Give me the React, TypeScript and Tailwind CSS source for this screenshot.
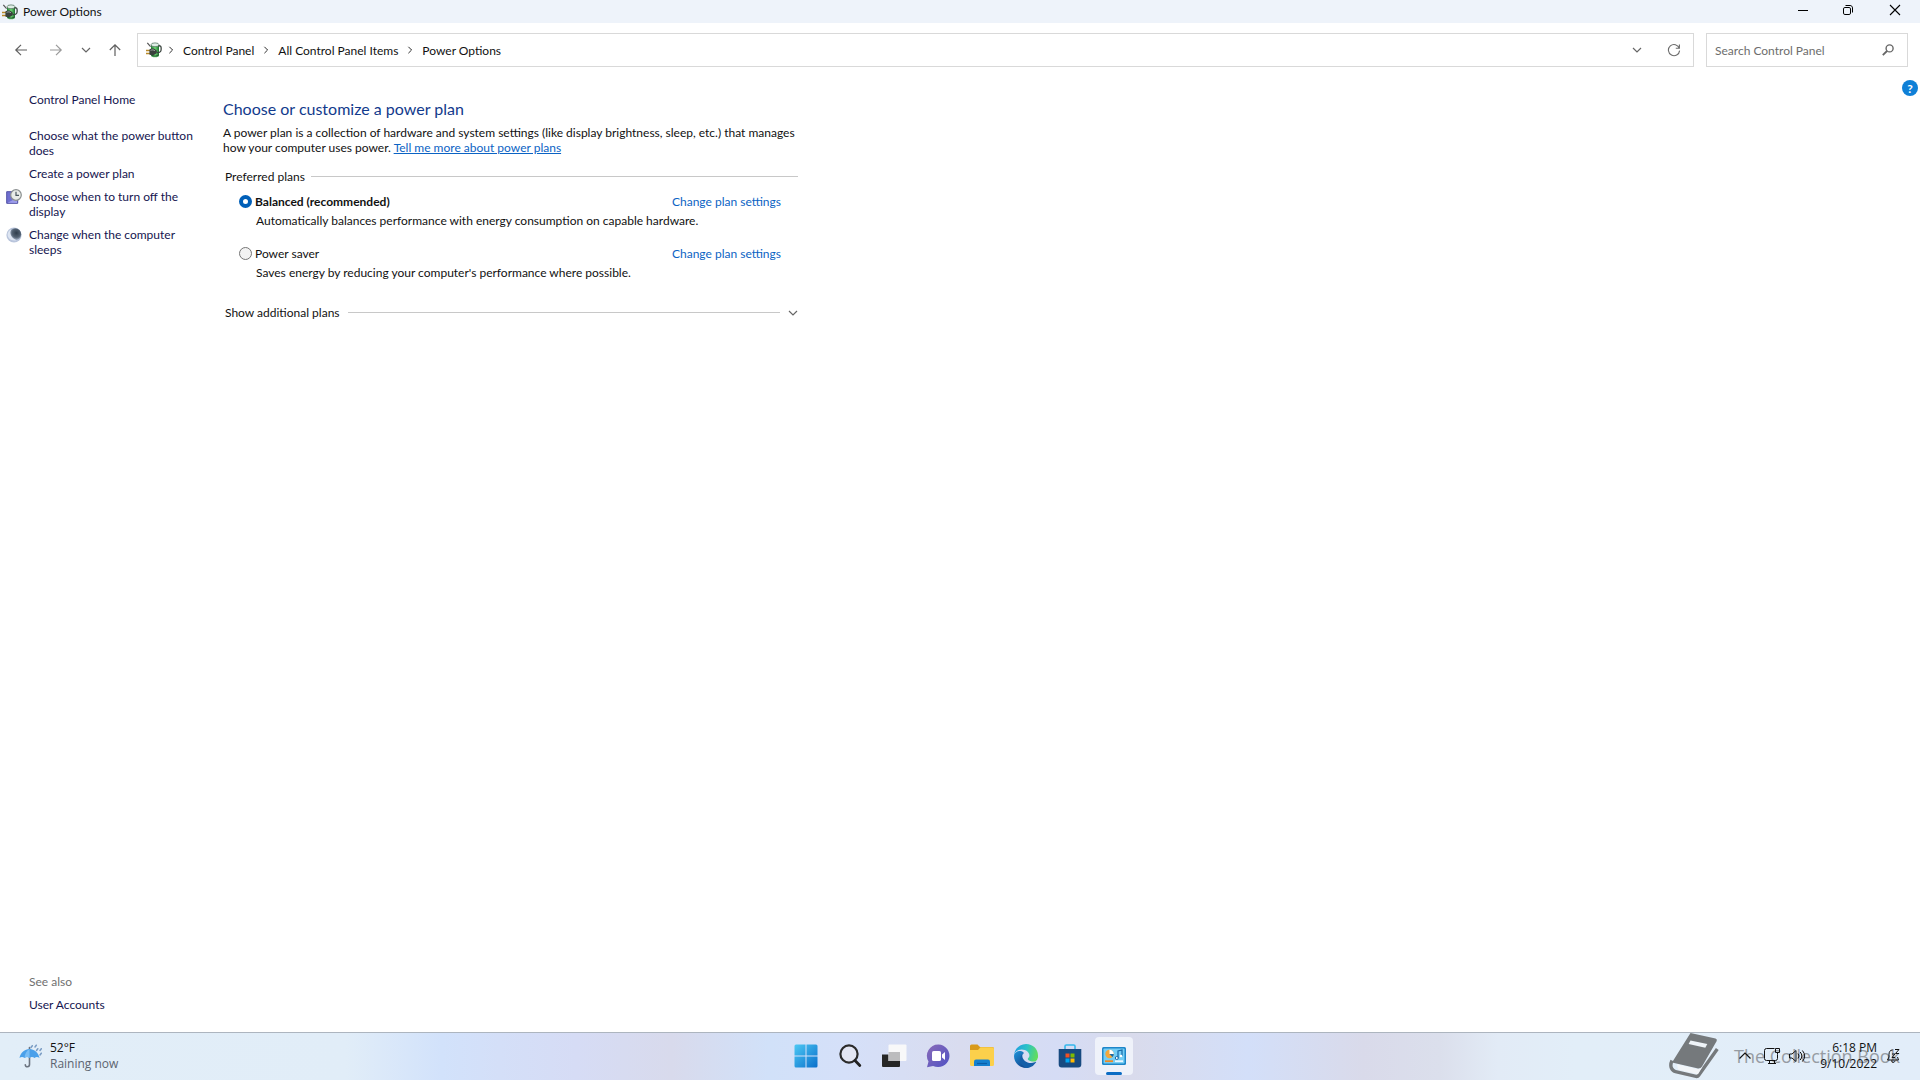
import { useState } from "react";

const sidebarLinks = [
  { label: "Choose what the power button does", icon: null },
  { label: "Create a power plan", icon: null },
  { label: "Choose when to turn off the display", icon: "display" },
  { label: "Change when the computer sleeps", icon: "sleep" },
];

const plans = [
  {
    id: "balanced",
    name: "Balanced (recommended)",
    description: "Automatically balances performance with energy consumption on capable hardware.",
  },
  {
    id: "saver",
    name: "Power saver",
    description: "Saves energy by reducing your computer's performance where possible.",
  },
];

const crumbs = ["Control Panel", "All Control Panel Items", "Power Options"];

function PowerIcon() {
  return (
    <svg width="16" height="16" viewBox="0 0 16 16" className="shrink-0" aria-hidden="true">
      <defs>
        <linearGradient id="cell" x1="0" x2="1">
          <stop offset="0" stopColor="#1f7a33" />
          <stop offset="0.5" stopColor="#6fdc74" />
          <stop offset="1" stopColor="#1c6e2f" />
        </linearGradient>
      </defs>
      <path d="M5 3v10.5c0 2.4 8 2.4 8 0V3z" fill="url(#cell)" />
      <ellipse cx="9" cy="2.8" rx="4" ry="1.9" fill="#dfeee6" stroke="#5c7a68" strokeWidth="0.8" />
      <path d="M5.5 12.7c1.4 1.9 5.8 1.9 7 0" stroke="#24502f" fill="none" />
      <path d="M1.3.8 4.6 4.6" stroke="#555" strokeWidth="1.2" />
      <path d="M11 10.6c4 .6 4.5-2.4 4-5.6-.4-1.4-1.6-1.6-2.4-.6" fill="none" stroke="#3c4640" strokeWidth="1.3" />
      <path d="M0 8.4h4M0 11.6h4" stroke="#b98a2b" strokeWidth="1.5" />
      <path d="M3.4 7.4C5 6 9 6 10.6 8.6c.8 1.6 0 3.4-1.8 4-2 .8-4.2.6-5.4-.2z" fill="#39413d" />
      <path d="M4.6 8.4c1.6-.8 3.2-.7 4.4.4" stroke="#9ba5a0" fill="none" />
    </svg>
  );
}

function DisplayClockIcon() {
  return (
    <svg width="16" height="16" viewBox="0 0 16 16" aria-hidden="true">
      <path d="M.7 2.7h11v11.6H.7z" fill="#6f6fd0" stroke="#5252a6" />
      <path d="M1.5 13.8 11 9v5z" fill="#9d9deb" />
      <circle cx="10" cy="6" r="5.3" fill="#e9ece8" stroke="#8b9091" strokeWidth="1.2" />
      <path d="M10 2.8V6.4h3" fill="none" stroke="#4c5860" strokeWidth="1.2" />
    </svg>
  );
}

function MoonIcon() {
  return (
    <svg width="16" height="16" viewBox="0 0 16 16" aria-hidden="true">
      <defs>
        <radialGradient id="moon" cx="0.6" cy="0.4" r="0.6">
          <stop offset="0" stopColor="#2f3d4c" />
          <stop offset="0.6" stopColor="#536273" />
          <stop offset="1" stopColor="#a9b7cc" />
        </radialGradient>
      </defs>
      <circle cx="8" cy="8" r="7.6" fill="#b9c5dc" />
      <circle cx="9.2" cy="7.2" r="6" fill="url(#moon)" />
      <path d="M5.2 2.6C3 6.4 5.4 11.4 10.6 13.2 5.6 14.6 1.6 11.4 1.6 7.6c0-2 1.6-4.2 3.6-5z" fill="#dde5f2" />
    </svg>
  );
}

function Chevron({ className = "" }: { className?: string }) {
  return (
    <svg width="10" height="10" viewBox="0 0 10 10" className={className} aria-hidden="true">
      <path d="M1 3l4 4 4-4" fill="none" stroke="currentColor" strokeWidth="1.2" />
    </svg>
  );
}

function TitleBar() {
  return (
    <header className="flex h-[23px] items-center bg-[#eef3fa] pl-[2px]">
      <PowerIcon />
      <h1 className="ml-[5px]">Power Options</h1>
      <div className="ml-auto flex h-5 self-start">
        <button type="button" aria-label="Minimize" className="flex w-[45px] items-center justify-center">
          <svg width="12" height="12" viewBox="0 0 12 12">
            <path d="M1 6.5h10" stroke="#000" />
          </svg>
        </button>
        <button type="button" aria-label="Restore" className="flex w-[45px] items-center justify-center">
          <svg width="12" height="12" viewBox="0 0 12 12" fill="none" stroke="#000">
            <rect x="1.5" y="3.5" width="7" height="7" rx="1.4" />
            <path d="M3.5 1.5h4.6c1.3 0 2.4 1 2.4 2.4v4.6" />
          </svg>
        </button>
        <button type="button" aria-label="Close" className="flex w-[50px] items-center justify-center">
          <svg width="12" height="12" viewBox="0 0 12 12">
            <path d="M1 1l10 10M11 1 1 11" stroke="#000" strokeWidth="1.1" />
          </svg>
        </button>
      </div>
    </header>
  );
}

function NavBar() {
  return (
    <nav className="flex items-center pt-[10px] pr-3 pl-2" aria-label="Address">
      <div className="flex w-[129px] items-center text-[#666]">
        <button type="button" aria-label="Back" className="flex w-[25px] justify-center">
          <svg width="14" height="14" viewBox="0 0 14 14" fill="none" stroke="#5f5f5f" strokeWidth="1.2">
            <path d="M13 7H1.8M7 1.8 1.8 7 7 12.2" />
          </svg>
        </button>
        <button type="button" aria-label="Forward" className="ml-[10px] flex w-[25px] justify-center">
          <svg width="14" height="14" viewBox="0 0 14 14" fill="none" stroke="#9a9a9a" strokeWidth="1.2">
            <path d="M1 7h11.2M7 1.8 12.2 7 7 12.2" />
          </svg>
        </button>
        <button type="button" aria-label="Recent locations" className="ml-2 flex w-5 justify-center">
          <Chevron />
        </button>
        <button type="button" aria-label="Up" className="ml-2 flex w-[22px] justify-center">
          <svg width="14" height="14" viewBox="0 0 14 14" fill="none" stroke="#5f5f5f" strokeWidth="1.2">
            <path d="M7 13V1.8M1.8 7 7 1.8 12.2 7" />
          </svg>
        </button>
      </div>

      <div className="flex h-[34px] flex-1 items-center border border-[#d9d9d9] bg-white pr-3 pl-2">
        <PowerIcon />
        <ol className="flex items-center">
          {crumbs.map((crumb) => (
            <li key={crumb} className="flex items-center">
              <Chevron className="mx-[5px] h-2 w-2 -rotate-90 text-[#222]" />
              <a href="#" className="px-[3px]">
                {crumb}
              </a>
            </li>
          ))}
        </ol>
        <button type="button" aria-label="Previous locations" className="ml-auto text-[#666]">
          <Chevron />
        </button>
        <button type="button" aria-label="Refresh" className="ml-[25px]">
          <svg width="14" height="14" viewBox="0 0 14 14" fill="none" stroke="#6b6b6b" strokeWidth="1.1">
            <path d="M12.3 5.2A5.6 5.6 0 1 0 12.6 7.6M12.4 1.4v3.8H8.8" />
          </svg>
        </button>
      </div>

      <form
        className="ml-3 flex h-[34px] w-[202px] items-center border border-[#d9d9d9] pr-[13px] pl-2"
        onSubmit={(e) => e.preventDefault()}
      >
        <input
          type="search"
          aria-label="Search Control Panel"
          placeholder="Search Control Panel"
          className="min-w-0 flex-1 outline-none placeholder:text-[#6d6d6d]"
        />
        <button type="submit" aria-label="Search">
          <svg width="12" height="12" viewBox="0 0 12 12" fill="none" stroke="#666">
            <circle cx="7.6" cy="4.4" r="3.5" strokeWidth="1.4" />
            <path d="M5 7 .8 11.2" strokeWidth="1.8" />
          </svg>
        </button>
      </form>
    </nav>
  );
}

function Sidebar() {
  return (
    <aside className="flex w-[200px] shrink-0 flex-col pt-[25px] pb-5 pl-[6px] text-[#15154f]">
      <a href="#" className="mb-[21px] pl-[23px]">
        Control Panel Home
      </a>
      <ul className="flex flex-col gap-2">
        {sidebarLinks.map((link) => (
          <li key={link.label} className="flex">
            <span className="w-[23px] shrink-0">
              {link.icon === "display" && <DisplayClockIcon />}
              {link.icon === "sleep" && <MoonIcon />}
            </span>
            <a href="#">{link.label}</a>
          </li>
        ))}
      </ul>
      <div className="mt-auto flex flex-col gap-2 pl-[23px]">
        <h2 className="text-[#707070]">See also</h2>
        <a href="#">User Accounts</a>
      </div>
    </aside>
  );
}

function PlanPicker() {
  const [active, setActive] = useState("balanced");

  return (
    <section className="w-[580px] pt-[31px]">
      <h2 className="text-[16px] leading-[21px] text-[#123a8c]">Choose or customize a power plan</h2>
      <p className="mt-[6px]">
        A power plan is a collection of hardware and system settings (like display brightness, sleep, etc.) that manages how your
        computer uses power.{" "}
        <a href="#" className="text-[#0b63c4] underline">
          Tell me more about power plans
        </a>
      </p>

      <fieldset className="mt-[14px] pr-[5px] pl-[2px]" aria-labelledby="preferred">
        <div className="flex items-center gap-[6px]">
          <span id="preferred">Preferred plans</span>
          <span className="h-px flex-1 bg-[#c8c8c8]" />
        </div>
        {plans.map((plan, idx) => (
          <div key={plan.id} className={`pr-[17px] pl-[14px] ${idx === 0 ? "mt-[10px]" : "mt-[18px]"}`}>
            <div className="flex items-center">
              <input
                type="radio"
                id={plan.id}
                name="plan"
                checked={active === plan.id}
                onChange={() => setActive(plan.id)}
                className="size-[13px] shrink-0 appearance-none rounded-full border border-[#757575] bg-[#f3f3f3] checked:border-4 checked:border-[#005fb8] checked:bg-white"
              />
              <label htmlFor={plan.id} className={`ml-[3px] ${active === plan.id ? "font-bold" : ""}`}>
                {plan.name}
              </label>
              <a href="#" className="ml-auto text-[#0b63c4]">
                Change plan settings
              </a>
            </div>
            <p className="mt-1 ml-[17px]">{plan.description}</p>
          </div>
        ))}
      </fieldset>

      <button type="button" className="mt-[25px] flex w-full items-center pr-[5px] pl-[2px]">
        <span>Show additional plans</span>
        <span className="mx-2 h-px flex-1 bg-[#c8c8c8]" />
        <Chevron className="text-[#666]" />
      </button>
    </section>
  );
}

function StartIcon() {
  return (
    <svg width="24" height="24" viewBox="0 0 24 24">
      <defs>
        <linearGradient id="start" x1="0" y1="0" x2="1" y2="1">
          <stop offset="0" stopColor="#4cc8f4" />
          <stop offset="1" stopColor="#0a6fcb" />
        </linearGradient>
      </defs>
      <path
        d="M.5 2Q.5.5 2 .5h9.5v11H.5zM12.5.5H22q1.500 0 1.500 1.500v9.500h-11zM.5 12.500h11v11H2q-1.500 0-1.500-1.500zM12.500 12.500h11V22q0 1.500-1.500 1.500h-9.500z"
        fill="url(#start)"
      />
    </svg>
  );
}

function SearchIcon() {
  return (
    <svg width="24" height="24" viewBox="0 0 24 24" fill="none">
      <circle cx="11" cy="10" r="8.600" fill="#e3e6f3" stroke="#2b2b2b" strokeWidth="2.200" />
      <path d="m17 16.500 4.800 5" stroke="#222" strokeWidth="2.800" strokeLinecap="round" />
    </svg>
  );
}

function TaskViewIcon() {
  return (
    <svg width="26" height="24" viewBox="0 0 26 24">
      <path d="M1 10.500h18v11.500q0 1-1 1H2q-1 0-1-1z" fill="#262626" />
      <path d="M7.500 1.500q0-1 1-1h16q1 0 1 1V16q0 1-1 1h-17z" fill="#f8f8f9" />
      <path d="M7.500 8H19v9H7.500z" fill="#bcbcbe" />
    </svg>
  );
}

function ChatIcon() {
  return (
    <svg width="24" height="24" viewBox="0 0 24 24">
      <defs>
        <linearGradient id="chat" x1="0" y1="0" x2="1" y2="1">
          <stop offset="0" stopColor="#8a6bb8" />
          <stop offset="1" stopColor="#4f52c4" />
        </linearGradient>
      </defs>
      <path d="M12.500.5a11.300 11.300 0 1 1-5.400 21.400L1 23.300l1.500-5.800A11.300 11.300 0 0 1 12.500.5z" fill="url(#chat)" />
      <rect x="6" y="7" width="9" height="10" rx="1.600" fill="#fff" />
      <path d="m16 10.500 3-2.500v8l-3-2.500z" fill="#fff" />
    </svg>
  );
}

function ExplorerIcon() {
  return (
    <svg width="26" height="24" viewBox="0 0 26 24">
      <path d="M1 2q0-1.500 1.500-1.500h6L11 3h12.500Q25 3 25 4.500V12H1z" fill="#d99a1a" />
      <path d="M1 6h8l2.500-2.800h12Q25 3.200 25 4.700v15.800q0 1.500-1.500 1.500h-21Q1 22 1 20.500z" fill="#fcd04b" />
      <path d="M5 22v-4.500q0-2 2-2h12q2 0 2 2V22z" fill="#1580cf" />
      <path d="M8 19.500h10" stroke="#0b5ea8" strokeWidth="1.200" />
    </svg>
  );
}

function EdgeIcon() {
  return (
    <svg width="24" height="24" viewBox="0 0 24 24">
      <defs>
        <linearGradient id="edgeTop" x1="0" y1="0.3" x2="1" y2="0.5">
          <stop offset="0" stopColor="#1f9ee0" />
          <stop offset="0.5" stopColor="#2bc3c7" />
          <stop offset="1" stopColor="#63dd5b" />
        </linearGradient>
        <linearGradient id="edgeLow" x1="0" y1="0" x2="0.6" y2="1">
          <stop offset="0" stopColor="#1e95dc" />
          <stop offset="1" stopColor="#124b93" />
        </linearGradient>
      </defs>
      <path
        d="M21.600 17.900c-.3.200-.7.300-1 .4a10 10 0 0 1-3.600.7c-4.700 0-8.700-3.200-8.700-7.300 0-1.200.7-2.200 1.700-2.800-4.200.2-5.300 4.600-5.300 7.200 0 7.300 6.700 8 8.200 8 .8 0 2-.2 2.700-.5A12 12 0 0 0 22 18.600c.3-.5-.1-.9-.4-.7z"
        fill="#145ea8"
      />
      <path d="M9.900 22.600a7.400 7.400 0 0 1-2.100-2C4.500 16 6.300 10.500 9.900 8.900 7.500 5.400 0 6.800 0 12c0 6.500 5.300 12 12 12-.7-.3-1.500-.8-2.100-1.400z" fill="url(#edgeLow)" />
      <path
        d="M14.300 14c-.1.100-.5.400-.5 1 0 .4.300.9.800 1.200 2.300 1.600 6.600 1.400 6.600 1.400A6.600 6.600 0 0 0 24 11.400C24 5 19 0 12 0 5.300 0 .1 5.300 0 11.800c.1-3.500 3.500-6.300 7.700-6.300 4.400 0 7.700 2.900 7.700 5.700 0 1.400-.5 2.200-1.100 2.800z"
        fill="url(#edgeTop)"
      />
    </svg>
  );
}

function StoreIcon() {
  return (
    <svg width="24" height="24" viewBox="0 0 24 24">
      <path d="M7 5.500V2.300Q7 1 8.300 1h7.400Q17 1 17 2.300v3.200" fill="none" stroke="#35b7ec" strokeWidth="1.600" />
      <path d="M.7 5h22.600v15.500q0 3-3 3H3.700q-3 0-3-3z" fill="#174a80" />
      <path d="M7.500 9.500h4v4h-4z" fill="#f25022" />
      <path d="M12.500 9.500h4v4h-4z" fill="#7fba00" />
      <path d="M7.500 14.500h4v4h-4z" fill="#00a4ef" />
      <path d="M12.500 14.500h4v4h-4z" fill="#ffb900" />
    </svg>
  );
}

function ControlPanelIcon() {
  return (
    <svg width="26" height="24" viewBox="0 0 26 24">
      <rect x="1" y="3" width="24" height="18" rx="1.500" fill="#1d86c9" />
      <rect x="2.500" y="4.500" width="21" height="15" rx="0.800" fill="#74cdf4" />
      <circle cx="8.500" cy="10" r="4.200" fill="#f2a73a" />
      <path d="M8.500 10V5.800a4.200 4.200 0 0 1 4.200 4.200z" fill="#fff" />
      <path d="M8.500 10h4.200a4.200 4.200 0 0 1-1.300 3z" fill="#1668a8" />
      <path d="M17 14V7l4-1v6" fill="none" stroke="#1668a8" strokeWidth="1.200" />
      <circle cx="15.800" cy="14" r="1.500" fill="#fff" stroke="#1668a8" />
      <circle cx="20" cy="12" r="1.300" fill="#fff" />
      <path d="M4 17.200h8" stroke="#f08a24" strokeWidth="1.800" />
      <path d="M14 17.200h8" stroke="#e9f7ff" strokeWidth="1.800" />
    </svg>
  );
}

const apps = [
  { name: "Start", Icon: StartIcon },
  { name: "Search", Icon: SearchIcon },
  { name: "Task view", Icon: TaskViewIcon },
  { name: "Chat", Icon: ChatIcon },
  { name: "File Explorer", Icon: ExplorerIcon },
  { name: "Microsoft Edge", Icon: EdgeIcon },
  { name: "Microsoft Store", Icon: StoreIcon },
  { name: "Control Panel", Icon: ControlPanelIcon, active: true },
];

function UmbrellaIcon() {
  return (
    <svg width="24" height="24" viewBox="0 0 24 24" fill="none">
      <path d="M10.500 3.500v2M10.500 13v7.500c0 3-4.200 3-4.200.3" stroke="#6c7480" strokeWidth="1.600" strokeLinecap="round" />
      <path
        d="M.5 14C1.500 8.500 5.800 5 10.500 5s9 3.500 10 9c-1.600-1.300-3.600-1.300-5 0-1.500-1.300-3.600-1.300-5 0-1.500-1.300-3.500-1.300-5 0-1.500-1.300-3.500-1.300-5 0z"
        fill="#4aa0ea"
      />
      <path d="M10.500 5c-3 1.800-4.800 5-5 9 1.500-1.300 3.500-1.300 5 0z" fill="#79bdf5" />
      <path
        d="m12 3.500 1.300-1.800M16 3l1.300-1.800M17.500 6.500l1.300-1.800M21 6.500l1.300-1.800M21 11l1.300-1.800"
        stroke="#7a9cc4"
        strokeWidth="1.500"
        strokeLinecap="round"
      />
    </svg>
  );
}

function Taskbar() {
  return (
    <footer className="relative grid h-12 grid-cols-[1fr_auto_1fr] items-center border-t border-[#adb5bf] bg-[linear-gradient(90deg,#e2eef8_0%,#e1edf8_18%,#d2e2fb_23%,#d4dff8_26%,#d6dcf5_30%,#d8daec_35%,#d1e1f9_40%,#d5e0f9_44%,#d9dcef_50%,#d5dcf5_55%,#d9dbec_59%,#d3dff9_65%,#d9daea_71%,#dbdfec_75%,#e2ebf6_78%,#e2eef8_82%,#e2edf9_100%)] pb-px font-['Open_Sans','Noto_Sans',sans-serif]">
      {/* channel logo, sits under the tray icons */}
      <div className="pointer-events-none absolute top-0 right-5 flex items-center gap-[15px] text-[18px] leading-[44px] text-[#969ca3]">
        <svg width="50" height="46" viewBox="0 0 50 46" aria-hidden="true">
          <path d="M21.500 0 46.500 5.500q2 .6 1.200 2.500L33 33.500Q31.500 36 28 35.200L3 29.500z" fill="#75797c" />
          <path d="M3 27.500C0 34 3.500 38 6.500 38.600L27 43.400q1.700.3 2.700-1.200L48.300 16" fill="none" stroke="#75797c" strokeWidth="3.400" />
          <path d="M8 31.300 28 36q3.500.8 5.500-2.300L29 41.300 9 36.500z" fill="#f2f5f8" />
          <path d="m21.500 7.500 16.800 3.600-2 3.600L19.600 11z" fill="#eef3f8" />
        </svg>
        <span>The Collection Book</span>
      </div>

      <button type="button" className="flex items-center gap-[7px] pl-[19px] text-left leading-4">
        <UmbrellaIcon />
        <span>
          <span className="block">52°F</span>
          <span className="block text-[#5c6470]">Raining now</span>
        </span>
      </button>

      <div className="flex">
        {apps.map(({ name, Icon, active }) => (
          <button
            key={name}
            type="button"
            aria-label={name}
            className="relative flex h-11 w-11 items-center justify-center"
          >
            <span className={`flex size-[38px] items-center justify-center rounded ${active ? "bg-[#eff2fa]" : ""}`}>
              <Icon />
            </span>
            {active && <span className="absolute bottom-[3px] h-[3px] w-4 rounded-full bg-[#0b6cc4]" />}
          </button>
        ))}
      </div>

      <div className="relative flex items-center justify-end pr-5">
        <button type="button" aria-label="Show hidden icons" className="mr-3">
          <svg width="14" height="14" viewBox="0 0 14 14" fill="none" stroke="#111" strokeWidth="1.200">
            <path d="m1.500 9.500 5.500-5.500 5.500 5.500" />
          </svg>
        </button>
        <button type="button" aria-label="Network" className="mr-2">
          <svg width="17" height="16" viewBox="0 0 17 16" fill="none" stroke="#111">
            <path d="M10.500.5h-8q-2 0-2 2v8q0 2 2 2h9q2 0 2-2V6.500M4 15.500h8M5.500 12.500v3M10.500 12.500v3" />
            <path d="M11.500.5h4v4h-4zM13.500 4.500v2" />
          </svg>
        </button>
        <button type="button" aria-label="Volume" className="mr-[14px]">
          <svg width="17" height="14" viewBox="0 0 17 14" fill="none" stroke="#111">
            <path d="M.5 5v4h2.500l4 3.500v-11L3 5z" />
            <path d="M9 4.500q2 2.500 0 5M11.200 3q3.300 4 0 8M13.400 1.500q4.600 5.500 0 11" />
          </svg>
        </button>
        <button type="button" className="text-right leading-4">
          <span className="block">6:18 PM</span>
          <span className="block">9/10/2022</span>
        </button>
        <button type="button" aria-label="Notifications" className="ml-[9px]">
          <svg width="14" height="16" viewBox="0 0 14 16" fill="none" stroke="#111">
            <path d="M6.500 2C4 2 3 4 3 6.500V9l-1.500 3h11L11.500 9M5.500 12.500c0 2.500 3.500 2.500 3.500 0" />
            <path d="M9 1.500h4L9.500 5.500H13M6 6h3L6 9.500h3" />
          </svg>
        </button>
      </div>
    </footer>
  );
}

export default function App() {
  return (
    <div className="flex min-h-screen flex-col bg-white font-[Lato,'Open_Sans',sans-serif] text-[12px] leading-[15px] text-[#111]">
      <TitleBar />
      <NavBar />
      <main className="flex flex-1">
        <Sidebar />
        <div className="ml-[23px] flex-1">
          <PlanPicker />
        </div>
        <button
          type="button"
          aria-label="Help"
          className="mt-[13px] mr-[2px] flex size-4 items-center justify-center rounded-full bg-[#0f80d7] font-bold text-white"
        >
          ?
        </button>
      </main>
      <Taskbar />
    </div>
  );
}
